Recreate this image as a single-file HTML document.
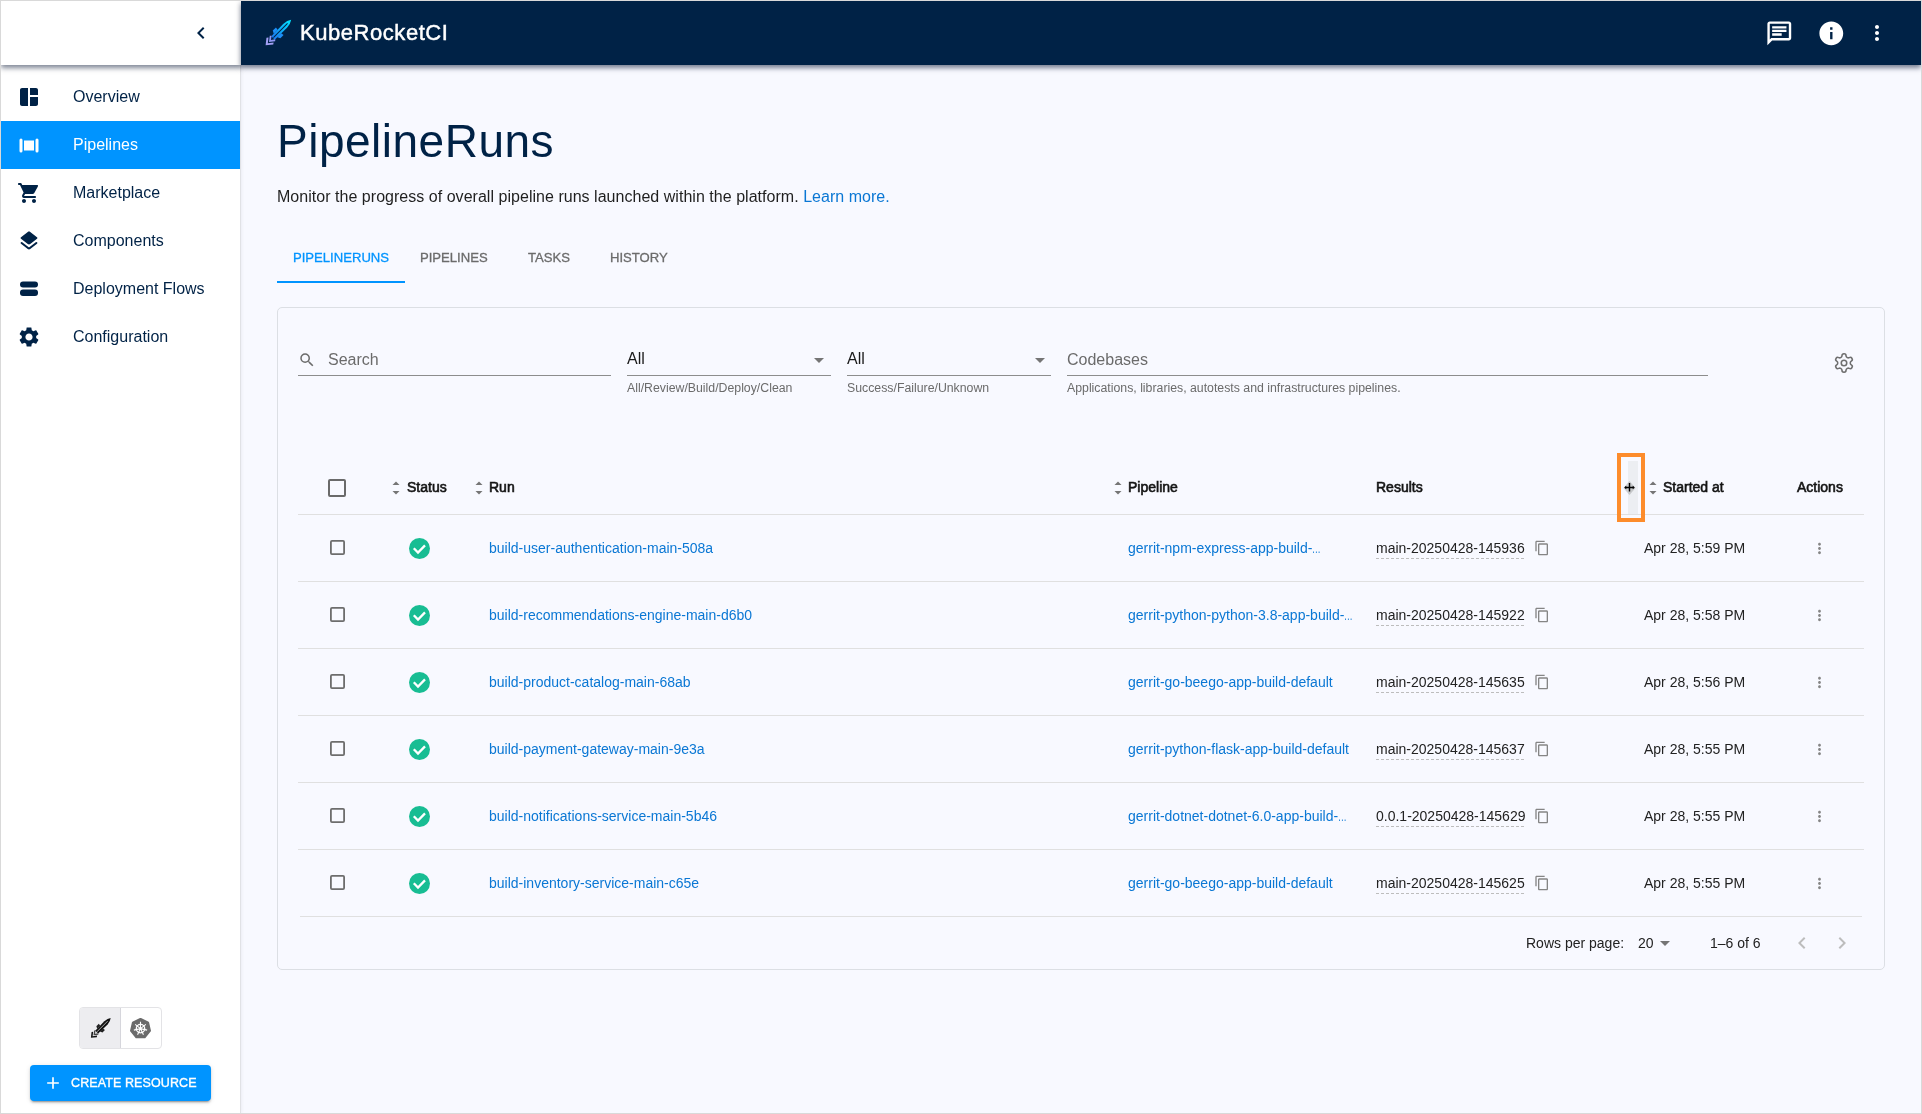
<!DOCTYPE html>
<html><head><meta charset="utf-8">
<style>
*{box-sizing:border-box;margin:0;padding:0}
html,body{width:1922px;height:1114px;overflow:hidden;background:#f8f9ff}
body{font-family:"Liberation Sans",sans-serif;position:relative;color:#222}
.a{position:absolute}
.t{position:absolute;white-space:nowrap;line-height:1;will-change:transform}
#border{position:absolute;left:0;top:0;width:1922px;height:1114px;border:1px solid #d9d9d9;z-index:50;pointer-events:none}
#side{position:absolute;left:1px;top:1px;width:240px;height:1112px;background:#fff;border-right:1px solid #e1e2e6;box-shadow:1px 0 3px rgba(0,0,40,.05)}
#sidetop{position:absolute;left:1px;top:1px;width:240px;height:64px;background:#fff;box-shadow:0 3px 5px rgba(0,15,45,.5);z-index:2}
#appbar{position:absolute;left:241px;top:1px;width:1680px;height:64px;background:#002246;box-shadow:0 3px 5px rgba(0,15,45,.5),-1px 0 5px rgba(0,15,45,.08);z-index:3}
.nav{position:absolute;left:1px;width:239px;height:48px;color:#002246;font-size:16px}
.nav .lbl{position:absolute;left:72px;top:16px;line-height:1;white-space:nowrap;will-change:transform}
.nav svg{position:absolute;left:16px;top:12px}
.nav.sel{background:#0094ff;color:#fff}
.hd{font-size:14px;color:#141414;-webkit-text-stroke:0.6px #141414}
.lnk{color:#0a77d4;font-size:14px}
.cell{font-size:14px;color:#222}
.hline{position:absolute;left:298px;width:1566px;height:1px;background:#e0e0e0}
.cb{position:absolute;border:2px solid #6a6a6a;border-radius:2px}
.ok{position:absolute;width:20px;height:20px;border-radius:50%;background:#18bd93}
.sort{position:absolute;width:8px;height:14px}
.dash{position:absolute;height:1px;background-image:linear-gradient(to right,#bdbdbd 60%,transparent 60%);background-size:5px 1px}
</style></head><body>
<div id="border"></div>

<!-- SIDEBAR -->
<div id="side">
</div>
<div class="nav" style="top:73px"><svg width="24" height="24" viewBox="0 0 24 24" fill="#002246"><path d="M11 21H5c-1.1 0-2-.9-2-2V5c0-1.1.9-2 2-2h6v18zm2 0h6c1.1 0 2-.9 2-2v-7h-8v9zm8-11V5c0-1.1-.9-2-2-2h-6v7h8z"/></svg><span class="lbl">Overview</span></div>
<div class="nav sel" style="top:121px"><svg width="24" height="24" viewBox="0 0 24 24" fill="#fff"><rect x="2.5" y="5.5" width="3" height="14" rx="1.5"/><rect x="18.5" y="5.5" width="3" height="14" rx="1.5"/><rect x="7" y="7.5" width="10" height="10"/></svg><span class="lbl">Pipelines</span></div>
<div class="nav" style="top:169px"><svg width="24" height="24" viewBox="0 0 24 24" fill="#002246"><path d="M7 18c-1.1 0-1.99.9-1.99 2S5.9 22 7 22s2-.9 2-2-.9-2-2-2zM1 3c0 .55.45 1 1 1h1l3.6 7.59-1.35 2.44C4.52 15.37 5.48 17 7 17h11c.55 0 1-.45 1-1s-.45-1-1-1H7l1.1-2h7.45c.75 0 1.41-.41 1.75-1.03l3.58-6.49A.996.996 0 0 0 20.01 4H5.21l-.67-1.43a.993.993 0 0 0-.9-.57H2c-.55 0-1 .45-1 1zm16 15c-1.1 0-1.99.9-1.99 2s.89 2 1.99 2 2-.9 2-2-.9-2-2-2z"/></svg><span class="lbl">Marketplace</span></div>
<div class="nav" style="top:217px"><svg width="24" height="24" viewBox="0 0 24 24" fill="#002246"><path d="M12.6 18.06c-.36.28-.87.28-1.23 0l-6.15-4.78a.991.991 0 0 0-1.22 0 .997.997 0 0 0 0 1.58l6.76 5.26c.72.56 1.73.56 2.46 0l6.76-5.26c.51-.4.51-1.17 0-1.57l-.01-.01a.991.991 0 0 0-1.22 0l-6.15 4.78zm.63-3.02 6.76-5.26c.51-.4.51-1.18 0-1.58l-6.76-5.26c-.72-.56-1.73-.56-2.46 0L4.01 8.21c-.51.4-.51 1.18 0 1.58l6.76 5.26c.72.56 1.74.56 2.46-.01z"/></svg><span class="lbl">Components</span></div>
<div class="nav" style="top:265px"><svg width="24" height="24" viewBox="0 0 24 24" fill="#002246"><rect x="3" y="4.5" width="18" height="6" rx="3"/><rect x="3" y="12.5" width="18" height="6.5" rx="3"/></svg><span class="lbl">Deployment Flows</span></div>
<div class="nav" style="top:313px"><svg width="24" height="24" viewBox="0 0 24 24" fill="#002246"><path d="M19.14 12.94c.04-.3.06-.61.06-.94 0-.32-.02-.64-.07-.94l2.03-1.58c.18-.14.23-.41.12-.61l-1.92-3.32c-.12-.22-.37-.29-.59-.22l-2.39.96c-.5-.38-1.03-.7-1.62-.94l-.36-2.54c-.04-.24-.24-.41-.48-.41h-3.84c-.24 0-.43.17-.47.41l-.36 2.54c-.59.24-1.13.57-1.62.94l-2.39-.96c-.22-.08-.47 0-.59.22L2.74 8.87c-.12.21-.08.47.12.61l2.03 1.58c-.05.3-.09.63-.09.94s.02.64.07.94l-2.03 1.58c-.18.14-.23.41-.12.61l1.92 3.32c.12.22.37.29.59.22l2.39-.96c.5.38 1.03.7 1.62.94l.36 2.54c.05.24.24.41.48.41h3.84c.24 0 .44-.17.47-.41l.36-2.54c.59-.24 1.13-.56 1.62-.94l2.39.96c.22.08.47 0 .59-.22l1.92-3.32c.12-.22.07-.47-.12-.61l-2.01-1.58zM12 15.6c-1.98 0-3.6-1.62-3.6-3.6s1.62-3.6 3.6-3.6 3.6 1.62 3.6 3.6-1.62 3.6-3.6 3.6z"/></svg><span class="lbl">Configuration</span></div>

<div id="sidetop">
  <svg class="a" style="left:188px;top:20px" width="24" height="24" viewBox="0 0 24 24" fill="#002246"><path d="M15.41 7.41 14 6l-6 6 6 6 1.41-1.41L10.83 12z"/></svg>
</div>

<!-- APP BAR -->
<div id="appbar">
  <svg class="a" style="left:17px;top:11px" width="40" height="40" viewBox="0 0 40 40">
    <defs><linearGradient id="rg" x1="0" y1="0" x2="1" y2="0"><stop offset="0" stop-color="#1a7cf5"/><stop offset="1" stop-color="#00e8ff"/></linearGradient></defs>
    <g transform="rotate(-45 20 21)">
      <path d="M13 18.6 L30 18.3 Q35.5 18.6 38.6 21 Q35.5 23.4 30 23.7 L13 23.4 Z" fill="url(#rg)"/>
      <path d="M13.5 21 L33.5 21" stroke="#002246" stroke-width="1"/>
      <path d="M16.5 18.5 L18 15.6 L22.5 15.6 L22 18.5 Z" fill="#1e8ff7"/>
      <path d="M16.5 23.5 L18 26.4 L22.5 26.4 L22 23.5 Z" fill="#1e8ff7"/>
      <path d="M2.5 21 L8.5 16.2 L10.2 17.4 L5.6 21 L10.2 24.6 L8.5 25.8 Z" fill="#a3a0f5"/>
      <path d="M7.2 21 L12.2 17.2 L13.6 18.4 L10 21 L13.6 23.6 L12.2 24.8 Z" fill="#8f96f2"/>
    </g>
  </svg>
  <span class="t" style="left:59px;top:21px;font-size:22px;letter-spacing:0.55px;-webkit-text-stroke:0.45px #fff;color:#fff">KubeRocketCI</span>
  <svg class="a" style="left:1523.7px;top:17.7px" width="28.6" height="28.6" viewBox="0 0 24 24" fill="#fff"><path d="M4 4h16v12H5.17L4 17.17V4m0-2c-1.1 0-1.99.9-1.99 2L2 22l4-4h14c1.1 0 2-.9 2-2V4c0-1.1-.9-2-2-2H4zm2 10h8v2H6v-2zm0-3h12v2H6V9zm0-3h12v2H6V6z"/></svg>
  <svg class="a" style="left:1575.7px;top:17.7px" width="28.6" height="28.6" viewBox="0 0 24 24" fill="#fff"><path d="M12 2C6.48 2 2 6.48 2 12s4.48 10 10 10 10-4.48 10-10S17.52 2 12 2zm1 15h-2v-6h2v6zm0-8h-2V7h2v2z"/></svg>
  <svg class="a" style="left:1624px;top:20px" width="24" height="24" viewBox="0 0 24 24" fill="#fff"><path d="M12 8c1.1 0 2-.9 2-2s-.9-2-2-2-2 .9-2 2 .9 2 2 2zm0 2c-1.1 0-2 .9-2 2s.9 2 2 2 2-.9 2-2-.9-2-2-2zm0 6c-1.1 0-2 .9-2 2s.9 2 2 2 2-.9 2-2-.9-2-2-2z"/></svg>
</div>

<!-- MAIN -->
<span class="t" style="left:277px;top:118px;font-size:46px;letter-spacing:0.5px;color:#002246">PipelineRuns</span>
<span class="t" style="left:277px;top:189px;font-size:16px;letter-spacing:0.03px;color:#1f1f1f">Monitor the progress of overall pipeline runs launched within the platform. <span style="color:#0a77d4">Learn more.</span></span>

<!-- tabs -->
<span class="t" style="left:293px;top:251px;font-size:13.1px;color:#0094ff;-webkit-text-stroke:0.3px #0094ff">PIPELINERUNS</span>
<span class="t" style="left:420px;top:251px;font-size:13.1px;color:#6b6b6b;-webkit-text-stroke:0.3px #6b6b6b">PIPELINES</span>
<span class="t" style="left:528px;top:251px;font-size:13.1px;color:#6b6b6b;-webkit-text-stroke:0.3px #6b6b6b">TASKS</span>
<span class="t" style="left:610px;top:251px;font-size:13.1px;color:#6b6b6b;-webkit-text-stroke:0.3px #6b6b6b">HISTORY</span>
<div class="a" style="left:277px;top:281px;width:128px;height:2px;background:#0094ff"></div>

<!-- card -->
<div class="a" id="card" style="left:277px;top:307px;width:1608px;height:663px;border:1px solid #dcdfe4;border-radius:5px"></div>


<!-- filters -->
<svg class="a" style="left:298px;top:351px" width="18" height="18" viewBox="0 0 24 24" fill="#6b6b6b"><path d="M15.5 14h-.79l-.28-.27A6.471 6.471 0 0 0 16 9.5 6.5 6.5 0 1 0 9.5 16c1.61 0 3.09-.59 4.23-1.57l.27.28v.79l5 4.99L20.49 19l-4.99-5zm-6 0C7.01 14 5 11.99 5 9.5S7.01 5 9.5 5 14 7.01 14 9.5 11.99 14 9.5 14z"/></svg>
<span class="t" style="left:328px;top:352px;font-size:16px;color:#6b6b6b">Search</span>
<div class="a" style="left:298px;top:375px;width:313px;height:1px;background:#8d8d8d"></div>

<span class="t" style="left:627px;top:351px;font-size:16px;color:#1a1a1a">All</span>
<div class="a" style="left:814px;top:358px;width:0;height:0;border-left:5px solid transparent;border-right:5px solid transparent;border-top:5px solid #757575"></div>
<div class="a" style="left:627px;top:375px;width:204px;height:1px;background:#8d8d8d"></div>
<span class="t" style="left:627px;top:382px;font-size:12.3px;color:#6b6b6b">All/Review/Build/Deploy/Clean</span>

<span class="t" style="left:847px;top:351px;font-size:16px;color:#1a1a1a">All</span>
<div class="a" style="left:1035px;top:358px;width:0;height:0;border-left:5px solid transparent;border-right:5px solid transparent;border-top:5px solid #757575"></div>
<div class="a" style="left:847px;top:375px;width:204px;height:1px;background:#8d8d8d"></div>
<span class="t" style="left:847px;top:382px;font-size:12.3px;color:#6b6b6b">Success/Failure/Unknown</span>

<span class="t" style="left:1067px;top:352px;font-size:16px;color:#6b6b6b">Codebases</span>
<div class="a" style="left:1067px;top:375px;width:641px;height:1px;background:#8d8d8d"></div>
<span class="t" style="left:1067px;top:382px;font-size:12.3px;color:#6b6b6b">Applications, libraries, autotests and infrastructures pipelines.</span>

<svg class="a" style="left:1833px;top:352px" width="22" height="22" viewBox="0 0 24 24" fill="none" stroke="#6f6f6f" stroke-width="1.7" stroke-linecap="round" stroke-linejoin="round"><path d="M12.22 2h-.44a2 2 0 0 0-2 2v.18a2 2 0 0 1-1 1.73l-.43.25a2 2 0 0 1-2 0l-.15-.08a2 2 0 0 0-2.73.73l-.22.38a2 2 0 0 0 .73 2.73l.15.1a2 2 0 0 1 1 1.72v.51a2 2 0 0 1-1 1.74l-.15.09a2 2 0 0 0-.73 2.730l.22.38a2 2 0 0 0 2.73.73l.15-.08a2 2 0 0 1 2 0l.43.25a2 2 0 0 1 1 1.73V20a2 2 0 0 0 2 2h.44a2 2 0 0 0 2-2v-.18a2 2 0 0 1 1-1.73l.43-.25a2 2 0 0 1 2 0l.15.08a2 2 0 0 0 2.73-.73l.22-.39a2 2 0 0 0-.73-2.73l-.15-.08a2 2 0 0 1-1-1.74v-.5a2 2 0 0 1 1-1.74l.15-.09a2 2 0 0 0 .73-2.73l-.22-.38a2 2 0 0 0-2.73-.73l-.15.08a2 2 0 0 1-2 0l-.43-.25a2 2 0 0 1-1-1.73V4a2 2 0 0 0-2-2z"/><circle cx="12" cy="12" r="3"/></svg>

<!-- table header -->
<div class="cb" style="left:328px;top:479px;width:18px;height:18px"></div>
<svg class="sort" style="left:392px;top:481px" width="8" height="14" viewBox="0 0 8 14" fill="#757575"><path d="M0.5 4L4 0.5 7.5 4z"/><path d="M0.5 10L4 13.5 7.5 10z"/></svg>
<span class="t hd" style="left:407px;top:480px">Status</span>
<svg class="sort" style="left:475px;top:481px" width="8" height="14" viewBox="0 0 8 14" fill="#757575"><path d="M0.5 4L4 0.5 7.5 4z"/><path d="M0.5 10L4 13.5 7.5 10z"/></svg>
<span class="t hd" style="left:489px;top:480px">Run</span>
<svg class="sort" style="left:1114px;top:481px" width="8" height="14" viewBox="0 0 8 14" fill="#757575"><path d="M0.5 4L4 0.5 7.5 4z"/><path d="M0.5 10L4 13.5 7.5 10z"/></svg>
<span class="t hd" style="left:1128px;top:480px">Pipeline</span>
<span class="t hd" style="left:1376px;top:480px">Results</span>
<div class="a" style="left:1628px;top:461px;width:10px;height:53px;background:#eceef2"></div>
<svg class="sort" style="left:1649px;top:481px" width="8" height="14" viewBox="0 0 8 14" fill="#757575"><path d="M0.5 4L4 0.5 7.5 4z"/><path d="M0.5 10L4 13.5 7.5 10z"/></svg>
<span class="t hd" style="left:1663px;top:480px">Started at</span>
<span class="t hd" style="left:1797px;top:480px">Actions</span>
<div class="hline" style="top:514px"></div>
<svg class="a" style="left:329.5px;top:540.1px" width="15" height="15" viewBox="0 0 15 15"><rect x="0.9" y="0.9" width="13.2" height="13.2" rx="1.1" fill="none" stroke="#6d6d6d" stroke-width="1.8"/></svg>
<svg class="a" style="left:409px;top:538px" width="21" height="21" viewBox="0 0 21 21"><circle cx="10.5" cy="10.5" r="10.5" fill="#18bd93"/><path d="M4.8 10.3 L9 14.6 L16 7.4" fill="none" stroke="#fff" stroke-width="2.3"/></svg>
<span class="t lnk" style="left:489px;top:541px">build-user-authentication-main-508a</span>
<span class="t lnk" style="left:1128px;top:541px">gerrit-npm-express-app-build-<span style="display:inline-block;transform:scaleX(0.62);transform-origin:0 0">…</span></span>
<span class="t cell" style="left:1376px;top:541px">main-20250428-145936</span>
<div class="dash" style="left:1376px;top:558px;width:149px"></div>
<svg class="a" style="left:1534px;top:540px" width="16" height="16" viewBox="0 0 24 24" fill="#858585"><path d="M16 1H4c-1.1 0-2 .9-2 2v14h2V3h12V1zm3 4H8c-1.1 0-2 .9-2 2v14c0 1.1.9 2 2 2h11c1.1 0 2-.9 2-2V7c0-1.1-.9-2-2-2zm0 16H8V7h11v14z"/></svg>
<span class="t cell" style="left:1644px;top:541px">Apr 28, 5:59 PM</span>
<svg class="a" style="left:1810.5px;top:539.5px" width="17" height="17" viewBox="0 0 24 24" fill="#858585"><path d="M12 8c1.1 0 2-.9 2-2s-.9-2-2-2-2 .9-2 2 .9 2 2 2zm0 2c-1.1 0-2 .9-2 2s.9 2 2 2 2-.9 2-2-.9-2-2-2zm0 6c-1.1 0-2 .9-2 2s.9 2 2 2 2-.9 2-2-.9-2-2-2z"/></svg>
<div class="hline" style="top:581px"></div>
<svg class="a" style="left:329.5px;top:607.1px" width="15" height="15" viewBox="0 0 15 15"><rect x="0.9" y="0.9" width="13.2" height="13.2" rx="1.1" fill="none" stroke="#6d6d6d" stroke-width="1.8"/></svg>
<svg class="a" style="left:409px;top:605px" width="21" height="21" viewBox="0 0 21 21"><circle cx="10.5" cy="10.5" r="10.5" fill="#18bd93"/><path d="M4.8 10.3 L9 14.6 L16 7.4" fill="none" stroke="#fff" stroke-width="2.3"/></svg>
<span class="t lnk" style="left:489px;top:608px">build-recommendations-engine-main-d6b0</span>
<span class="t lnk" style="left:1128px;top:608px">gerrit-python-python-3.8-app-build-<span style="display:inline-block;transform:scaleX(0.62);transform-origin:0 0">…</span></span>
<span class="t cell" style="left:1376px;top:608px">main-20250428-145922</span>
<div class="dash" style="left:1376px;top:625px;width:149px"></div>
<svg class="a" style="left:1534px;top:607px" width="16" height="16" viewBox="0 0 24 24" fill="#858585"><path d="M16 1H4c-1.1 0-2 .9-2 2v14h2V3h12V1zm3 4H8c-1.1 0-2 .9-2 2v14c0 1.1.9 2 2 2h11c1.1 0 2-.9 2-2V7c0-1.1-.9-2-2-2zm0 16H8V7h11v14z"/></svg>
<span class="t cell" style="left:1644px;top:608px">Apr 28, 5:58 PM</span>
<svg class="a" style="left:1810.5px;top:606.5px" width="17" height="17" viewBox="0 0 24 24" fill="#858585"><path d="M12 8c1.1 0 2-.9 2-2s-.9-2-2-2-2 .9-2 2 .9 2 2 2zm0 2c-1.1 0-2 .9-2 2s.9 2 2 2 2-.9 2-2-.9-2-2-2zm0 6c-1.1 0-2 .9-2 2s.9 2 2 2 2-.9 2-2-.9-2-2-2z"/></svg>
<div class="hline" style="top:648px"></div>
<svg class="a" style="left:329.5px;top:674.1px" width="15" height="15" viewBox="0 0 15 15"><rect x="0.9" y="0.9" width="13.2" height="13.2" rx="1.1" fill="none" stroke="#6d6d6d" stroke-width="1.8"/></svg>
<svg class="a" style="left:409px;top:672px" width="21" height="21" viewBox="0 0 21 21"><circle cx="10.5" cy="10.5" r="10.5" fill="#18bd93"/><path d="M4.8 10.3 L9 14.6 L16 7.4" fill="none" stroke="#fff" stroke-width="2.3"/></svg>
<span class="t lnk" style="left:489px;top:675px">build-product-catalog-main-68ab</span>
<span class="t lnk" style="left:1128px;top:675px">gerrit-go-beego-app-build-default</span>
<span class="t cell" style="left:1376px;top:675px">main-20250428-145635</span>
<div class="dash" style="left:1376px;top:692px;width:149px"></div>
<svg class="a" style="left:1534px;top:674px" width="16" height="16" viewBox="0 0 24 24" fill="#858585"><path d="M16 1H4c-1.1 0-2 .9-2 2v14h2V3h12V1zm3 4H8c-1.1 0-2 .9-2 2v14c0 1.1.9 2 2 2h11c1.1 0 2-.9 2-2V7c0-1.1-.9-2-2-2zm0 16H8V7h11v14z"/></svg>
<span class="t cell" style="left:1644px;top:675px">Apr 28, 5:56 PM</span>
<svg class="a" style="left:1810.5px;top:673.5px" width="17" height="17" viewBox="0 0 24 24" fill="#858585"><path d="M12 8c1.1 0 2-.9 2-2s-.9-2-2-2-2 .9-2 2 .9 2 2 2zm0 2c-1.1 0-2 .9-2 2s.9 2 2 2 2-.9 2-2-.9-2-2-2zm0 6c-1.1 0-2 .9-2 2s.9 2 2 2 2-.9 2-2-.9-2-2-2z"/></svg>
<div class="hline" style="top:715px"></div>
<svg class="a" style="left:329.5px;top:741.1px" width="15" height="15" viewBox="0 0 15 15"><rect x="0.9" y="0.9" width="13.2" height="13.2" rx="1.1" fill="none" stroke="#6d6d6d" stroke-width="1.8"/></svg>
<svg class="a" style="left:409px;top:739px" width="21" height="21" viewBox="0 0 21 21"><circle cx="10.5" cy="10.5" r="10.5" fill="#18bd93"/><path d="M4.8 10.3 L9 14.6 L16 7.4" fill="none" stroke="#fff" stroke-width="2.3"/></svg>
<span class="t lnk" style="left:489px;top:742px">build-payment-gateway-main-9e3a</span>
<span class="t lnk" style="left:1128px;top:742px">gerrit-python-flask-app-build-default</span>
<span class="t cell" style="left:1376px;top:742px">main-20250428-145637</span>
<div class="dash" style="left:1376px;top:759px;width:149px"></div>
<svg class="a" style="left:1534px;top:741px" width="16" height="16" viewBox="0 0 24 24" fill="#858585"><path d="M16 1H4c-1.1 0-2 .9-2 2v14h2V3h12V1zm3 4H8c-1.1 0-2 .9-2 2v14c0 1.1.9 2 2 2h11c1.1 0 2-.9 2-2V7c0-1.1-.9-2-2-2zm0 16H8V7h11v14z"/></svg>
<span class="t cell" style="left:1644px;top:742px">Apr 28, 5:55 PM</span>
<svg class="a" style="left:1810.5px;top:740.5px" width="17" height="17" viewBox="0 0 24 24" fill="#858585"><path d="M12 8c1.1 0 2-.9 2-2s-.9-2-2-2-2 .9-2 2 .9 2 2 2zm0 2c-1.1 0-2 .9-2 2s.9 2 2 2 2-.9 2-2-.9-2-2-2zm0 6c-1.1 0-2 .9-2 2s.9 2 2 2 2-.9 2-2-.9-2-2-2z"/></svg>
<div class="hline" style="top:782px"></div>
<svg class="a" style="left:329.5px;top:808.1px" width="15" height="15" viewBox="0 0 15 15"><rect x="0.9" y="0.9" width="13.2" height="13.2" rx="1.1" fill="none" stroke="#6d6d6d" stroke-width="1.8"/></svg>
<svg class="a" style="left:409px;top:806px" width="21" height="21" viewBox="0 0 21 21"><circle cx="10.5" cy="10.5" r="10.5" fill="#18bd93"/><path d="M4.8 10.3 L9 14.6 L16 7.4" fill="none" stroke="#fff" stroke-width="2.3"/></svg>
<span class="t lnk" style="left:489px;top:809px">build-notifications-service-main-5b46</span>
<span class="t lnk" style="left:1128px;top:809px">gerrit-dotnet-dotnet-6.0-app-build-<span style="display:inline-block;transform:scaleX(0.62);transform-origin:0 0">…</span></span>
<span class="t cell" style="left:1376px;top:809px">0.0.1-20250428-145629</span>
<div class="dash" style="left:1376px;top:826px;width:149px"></div>
<svg class="a" style="left:1534px;top:808px" width="16" height="16" viewBox="0 0 24 24" fill="#858585"><path d="M16 1H4c-1.1 0-2 .9-2 2v14h2V3h12V1zm3 4H8c-1.1 0-2 .9-2 2v14c0 1.1.9 2 2 2h11c1.1 0 2-.9 2-2V7c0-1.1-.9-2-2-2zm0 16H8V7h11v14z"/></svg>
<span class="t cell" style="left:1644px;top:809px">Apr 28, 5:55 PM</span>
<svg class="a" style="left:1810.5px;top:807.5px" width="17" height="17" viewBox="0 0 24 24" fill="#858585"><path d="M12 8c1.1 0 2-.9 2-2s-.9-2-2-2-2 .9-2 2 .9 2 2 2zm0 2c-1.1 0-2 .9-2 2s.9 2 2 2 2-.9 2-2-.9-2-2-2zm0 6c-1.1 0-2 .9-2 2s.9 2 2 2 2-.9 2-2-.9-2-2-2z"/></svg>
<div class="hline" style="top:849px"></div>
<svg class="a" style="left:329.5px;top:875.1px" width="15" height="15" viewBox="0 0 15 15"><rect x="0.9" y="0.9" width="13.2" height="13.2" rx="1.1" fill="none" stroke="#6d6d6d" stroke-width="1.8"/></svg>
<svg class="a" style="left:409px;top:873px" width="21" height="21" viewBox="0 0 21 21"><circle cx="10.5" cy="10.5" r="10.5" fill="#18bd93"/><path d="M4.8 10.3 L9 14.6 L16 7.4" fill="none" stroke="#fff" stroke-width="2.3"/></svg>
<span class="t lnk" style="left:489px;top:876px">build-inventory-service-main-c65e</span>
<span class="t lnk" style="left:1128px;top:876px">gerrit-go-beego-app-build-default</span>
<span class="t cell" style="left:1376px;top:876px">main-20250428-145625</span>
<div class="dash" style="left:1376px;top:893px;width:149px"></div>
<svg class="a" style="left:1534px;top:875px" width="16" height="16" viewBox="0 0 24 24" fill="#858585"><path d="M16 1H4c-1.1 0-2 .9-2 2v14h2V3h12V1zm3 4H8c-1.1 0-2 .9-2 2v14c0 1.1.9 2 2 2h11c1.1 0 2-.9 2-2V7c0-1.1-.9-2-2-2zm0 16H8V7h11v14z"/></svg>
<span class="t cell" style="left:1644px;top:876px">Apr 28, 5:55 PM</span>
<svg class="a" style="left:1810.5px;top:874.5px" width="17" height="17" viewBox="0 0 24 24" fill="#858585"><path d="M12 8c1.1 0 2-.9 2-2s-.9-2-2-2-2 .9-2 2 .9 2 2 2zm0 2c-1.1 0-2 .9-2 2s.9 2 2 2 2-.9 2-2-.9-2-2-2zm0 6c-1.1 0-2 .9-2 2s.9 2 2 2 2-.9 2-2-.9-2-2-2z"/></svg>
<div class="a" style="left:300px;top:916px;width:1562px;height:1px;background:#e0e0e0"></div>

<!-- pagination -->
<span class="t cell" style="left:1526px;top:936px">Rows per page:</span>
<span class="t cell" style="left:1638px;top:936px">20</span>
<div class="a" style="left:1660px;top:941px;width:0;height:0;border-left:5px solid transparent;border-right:5px solid transparent;border-top:5px solid #757575"></div>
<span class="t cell" style="left:1710px;top:936px">1–6 of 6</span>
<svg class="a" style="left:1790px;top:931px" width="24" height="24" viewBox="0 0 24 24" fill="#bdbdbd"><path d="M15.41 7.41 14 6l-6 6 6 6 1.41-1.41L10.83 12z"/></svg>
<svg class="a" style="left:1830px;top:931px" width="24" height="24" viewBox="0 0 24 24" fill="#bdbdbd"><path d="M10 6 8.59 7.41 13.17 12l-4.58 4.59L10 18l6-6z"/></svg>

<svg class="a" style="left:1621px;top:479px;z-index:9" width="17" height="17" viewBox="0 0 17 17">
  <path d="M8.5 2 L14.5 9 L8.5 16 L2.5 9 Z" fill="#9a9a9a" opacity="0.45"/>
  <path d="M8.5 4 L8.5 12.5 M4 8.5 L13 8.5" stroke="#000" stroke-width="1.4"/>
  <path d="M3.2 8.5 L5.3 6.8 L5.3 10.2 Z M13.8 8.5 L11.7 6.8 L11.7 10.2 Z" fill="#000"/>
</svg>
<!-- orange highlight -->
<div class="a" style="left:1617px;top:453px;width:28px;height:69px;border:4px solid #fd8c2b;z-index:10"></div>

<!-- sidebar bottom -->
<div class="a" style="left:79px;top:1007px;width:83px;height:42px;border:1px solid #e3e3e6;border-radius:4px;background:#fff;overflow:hidden">
  <div class="a" style="left:0;top:0;width:41px;height:40px;background:#ededf0;border-right:1px solid #d6d6dc"></div>
</div>
<svg class="a" style="left:84.5px;top:1011.8px" width="31" height="31" viewBox="0 0 40 40">
  <g transform="rotate(-45 20 21)">
    <path d="M13 18.3 L30 18 Q35.5 18.4 38.6 21 Q35.5 23.6 30 24 L13 23.7 Z" fill="#111"/>
    <path d="M13.5 21 L33 21" stroke="#ddd" stroke-width="0.9"/>
    <path d="M16.5 18.5 L18 15.4 L22.5 15.4 L22 18.5 Z" fill="#222"/>
    <path d="M16.5 23.5 L18 26.6 L22.5 26.6 L22 23.5 Z" fill="#222"/>
    <path d="M2.5 21 L8.5 16.2 L10.2 17.4 L5.6 21 L10.2 24.6 L8.5 25.8 Z" fill="#111"/>
    <path d="M7.2 21 L12.2 17.2 L13.6 18.4 L10 21 L13.6 23.6 L12.2 24.8 Z" fill="#444"/>
  </g>
</svg>
<svg class="a" style="left:130px;top:1018px" width="21" height="21" viewBox="0 0 21 21">
  <polygon points="10.50,0.60 18.32,4.37 20.25,12.83 14.84,19.61 6.16,19.61 0.75,12.83 2.68,4.37" fill="#6b6b6b" stroke="#6b6b6b" stroke-width="1.5" stroke-linejoin="round"/>
  <circle cx="10.5" cy="10.6" r="4.2" fill="none" stroke="#fff" stroke-width="1.3"/>
  <path d="M10.50 10.60 L10.50 3.80 M10.50 10.60 L15.82 6.36 M10.50 10.60 L17.13 12.11 M10.50 10.60 L13.45 16.73 M10.50 10.60 L7.55 16.73 M10.50 10.60 L3.87 12.11 M10.50 10.60 L5.18 6.36 " stroke="#fff" stroke-width="1.1"/>
  <circle cx="10.5" cy="10.6" r="1" fill="#fff"/>
</svg>
<div class="a" style="left:30px;top:1065px;width:181px;height:36px;background:#0094ff;border-radius:4px;box-shadow:0 3px 1px -2px rgba(0,0,0,.2),0 2px 2px 0 rgba(0,0,0,.14),0 1px 5px 0 rgba(0,0,0,.12)">
  <svg class="a" style="left:13px;top:8px" width="20" height="20" viewBox="0 0 24 24" fill="#fff"><path d="M19 13h-6v6h-2v-6H5v-2h6V5h2v6h6v2z"/></svg>
  <span class="t" style="left:41px;top:12px;font-size:12.5px;letter-spacing:0.1px;-webkit-text-stroke:0.35px #fff;color:#fff">CREATE RESOURCE</span>
</div>
</body></html>
